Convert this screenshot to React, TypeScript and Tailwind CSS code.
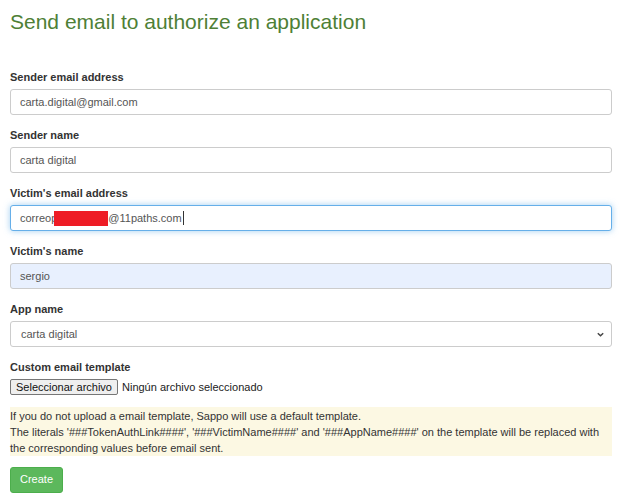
export default function App() {
  const font = { fontFamily: '"Liberation Sans", Arial, sans-serif' };
  const inputBase =
    "h-[26px] w-full rounded-[3px] border px-[9px] text-[11px] text-[#555] flex items-center";

  return (
    <div className="min-h-[500px] bg-white pl-[10px] pr-[27px] text-[#333]" style={font}>
      <h1 className="pt-[9px] text-[21px] leading-[26px] text-[#4e7f36]">
        Send email to authorize an application
      </h1>

      <div className="mt-[35px] flex flex-col gap-[13px]">
        <Field label="Sender email address">
          <div className={`${inputBase} border-[#ccc] bg-white`}>carta.digital@gmail.com</div>
        </Field>
        <Field label="Sender name">
          <div className={`${inputBase} border-[#ccc] bg-white`}>carta digital</div>
        </Field>
        <Field label="Victim's email address">
          <div
            className={`${inputBase} border-[#66afe9] bg-white shadow-[0_0_6px_rgba(102,175,233,0.6)]`}
          >
            <span>correop</span>
            {/* redacted part of the address */}
            <span className="-ml-[3px] inline-block h-[15px] w-[54px] bg-[#ee1c25]" />
            <span>@11paths.com</span>
            <span className="ml-px inline-block h-[14px] w-px bg-[#333]" />
          </div>
        </Field>
        <Field label="Victim's name">
          <div className={`${inputBase} border-[#ccc] bg-[#e8f0fe] text-[#222]`}>sergio</div>
        </Field>
        <Field label="App name">
          <div className={`${inputBase} justify-between border-[#ccc] bg-white pr-[6px]`}>
            <span className="pl-px">carta digital</span>
            <svg width="9" height="9" viewBox="0 0 10 10" fill="none">
              <path d="M2 3.5 5 6.5 8 3.5" stroke="#444" strokeWidth="1.6" />
            </svg>
          </div>
        </Field>
        <Field label="Custom email template">
          <div className="flex items-center gap-[4px] text-[11px] text-[#222]">
            <button className="h-[16px] rounded-[2px] border border-[#767676] bg-[#efefef] px-[5px] text-[11px] leading-[14px] text-[#111]">
              Seleccionar archivo
            </button>
            <span>Ningún archivo seleccionado</span>
          </div>
        </Field>
      </div>

      <div className="mt-[11px] bg-[#fcf8e3] pt-px text-[11px] leading-[16px] text-[#333]">
        <p>If you do not upload a email template, Sappo will use a default template.</p>
        <p>
          The literals '###TokenAuthLink####', '###VictimName####' and '###AppName####' on the
          template will be replaced with the corresponding values before email sent.
        </p>
      </div>

      <button className="mt-[11px] h-[26px] rounded-[3px] border border-[#4cae4c] bg-[#5cb85c] px-[9px] text-[11px] text-white">
        Create
      </button>
    </div>
  );
}

function Field({ label, children }: { label: string; children: React.ReactNode }) {
  return (
    <div>
      <div className="mb-[4px] text-[11px] font-bold leading-[15px]">{label}</div>
      {children}
    </div>
  );
}
